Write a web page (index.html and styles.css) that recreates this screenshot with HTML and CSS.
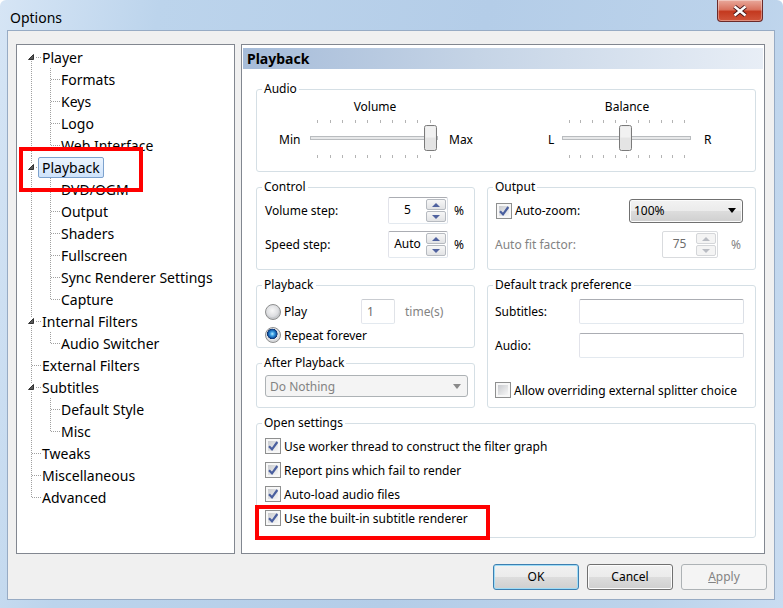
FILE: index.html
```html
<!DOCTYPE html>
<html lang="en">
<head>
<meta charset="UTF-8">
<title>Options</title>
<link rel="stylesheet" href="styles.css">
</head>
<body>
<div class="window">
    <div class="titlebar">
        <span class="title">Options</span>
        <div class="close-btn">
            <svg width="16" height="12" viewBox="0 0 16 12"><path d="M2.5 1.5 L13.5 10.5 M13.5 1.5 L2.5 10.5" stroke="#43161a" stroke-width="4.2"/><path d="M2.5 1.5 L13.5 10.5 M13.5 1.5 L2.5 10.5" stroke="#fff" stroke-width="2.4"/></svg>
        </div>
    </div>

    <div class="client">
        <div class="main">
            <!-- tree of pages -->
            <div class="tree-box">
                <ul class="tree">
                    <li>
                        <div class="node"><span class="twist"><svg width="8" height="8"><path d="M6.5 1.5 V6.5 H1.5 Z" fill="#595959" stroke="#333"/></svg></span><span class="label">Player</span></div>
                        <ul>
                            <li><div class="node"><span class="twist"></span><span class="label">Formats</span></div></li>
                            <li><div class="node"><span class="twist"></span><span class="label">Keys</span></div></li>
                            <li><div class="node"><span class="twist"></span><span class="label">Logo</span></div></li>
                            <li><div class="node"><span class="twist"></span><span class="label">Web Interface</span></div></li>
                        </ul>
                    </li>
                    <li>
                        <div class="node"><span class="twist"><svg width="8" height="8"><path d="M6.5 1.5 V6.5 H1.5 Z" fill="#595959" stroke="#333"/></svg></span><span class="label selected">Playback</span></div>
                        <ul>
                            <li><div class="node"><span class="twist"></span><span class="label">DVD/OGM</span></div></li>
                            <li><div class="node"><span class="twist"></span><span class="label">Output</span></div></li>
                            <li><div class="node"><span class="twist"></span><span class="label">Shaders</span></div></li>
                            <li><div class="node"><span class="twist"></span><span class="label">Fullscreen</span></div></li>
                            <li><div class="node"><span class="twist"></span><span class="label">Sync Renderer Settings</span></div></li>
                            <li><div class="node"><span class="twist"></span><span class="label">Capture</span></div></li>
                        </ul>
                    </li>
                    <li>
                        <div class="node"><span class="twist"><svg width="8" height="8"><path d="M6.5 1.5 V6.5 H1.5 Z" fill="#595959" stroke="#333"/></svg></span><span class="label">Internal Filters</span></div>
                        <ul>
                            <li><div class="node"><span class="twist"></span><span class="label">Audio Switcher</span></div></li>
                        </ul>
                    </li>
                    <li><div class="node"><span class="twist"></span><span class="label">External Filters</span></div></li>
                    <li>
                        <div class="node"><span class="twist"><svg width="8" height="8"><path d="M6.5 1.5 V6.5 H1.5 Z" fill="#595959" stroke="#333"/></svg></span><span class="label">Subtitles</span></div>
                        <ul>
                            <li><div class="node"><span class="twist"></span><span class="label">Default Style</span></div></li>
                            <li><div class="node"><span class="twist"></span><span class="label">Misc</span></div></li>
                        </ul>
                    </li>
                    <li><div class="node"><span class="twist"></span><span class="label">Tweaks</span></div></li>
                    <li><div class="node"><span class="twist"></span><span class="label">Miscellaneous</span></div></li>
                    <li><div class="node"><span class="twist"></span><span class="label">Advanced</span></div></li>
                </ul>
            </div>

            <!-- property page -->
            <div class="page">
                <div class="page-title">Playback</div>
                <div class="groups">
                    <fieldset class="group audio">
                        <legend>Audio</legend>
                        <div class="sliders">
                            <div class="slider vol">
                                <span class="slider-title">Volume</span>
                                <span class="end">Min</span>
                                <svg width="138" height="42">
                                    <path d="M11.5 2v3M24.5 2v3M36.5 2v3M49.5 2v3M61.5 2v3M74.5 2v3M86.5 2v3M99.5 2v3M111.5 2v3M124.5 2v3M11.5 37v3M24.5 37v3M36.5 37v3M49.5 37v3M61.5 37v3M74.5 37v3M86.5 37v3M99.5 37v3M111.5 37v3M124.5 37v3" stroke="#b4b4b4"/>
                                    <rect x="4.5" y="18.5" width="127" height="3" fill="#e7e8e9" stroke="#b9bcbf"/>
                                    <rect x="118.5" y="7.5" width="12" height="25" rx="2" fill="#e4e4e4" stroke="#7a7a7a"/>
                                    <rect x="119.5" y="8.5" width="10" height="11" fill="#f1f1f1"/>
                                </svg>
                                <span class="end far">Max</span>
                            </div>
                            <div class="slider bal">
                                <span class="slider-title">Balance</span>
                                <span class="end">L</span>
                                <svg width="138" height="42">
                                    <path d="M11.5 2v3M22.5 2v3M34.5 2v3M45.5 2v3M57.5 2v3M68.5 2v3M80.5 2v3M91.5 2v3M103.5 2v3M114.5 2v3M126.5 2v3M11.5 37v3M22.5 37v3M34.5 37v3M45.5 37v3M57.5 37v3M68.5 37v3M80.5 37v3M91.5 37v3M103.5 37v3M114.5 37v3M126.5 37v3" stroke="#b4b4b4"/>
                                    <rect x="4.5" y="18.5" width="128" height="3" fill="#e7e8e9" stroke="#b9bcbf"/>
                                    <rect x="61.5" y="7.5" width="12" height="25" rx="2" fill="#e4e4e4" stroke="#7a7a7a"/>
                                    <rect x="62.5" y="8.5" width="10" height="11" fill="#f1f1f1"/>
                                </svg>
                                <span class="end far">R</span>
                            </div>
                        </div>
                    </fieldset>

                    <fieldset class="group control">
                        <legend>Control</legend>
                        <div class="row">
                            <span class="field-label">Volume step:</span>
                            <span class="spin"><span class="spin-val">5</span><span class="spin-btns"><span class="up"></span><span class="down"></span></span></span>
                            <span class="unit">%</span>
                        </div>
                        <div class="row">
                            <span class="field-label">Speed step:</span>
                            <span class="spin"><span class="spin-val">Auto</span><span class="spin-btns"><span class="up"></span><span class="down"></span></span></span>
                            <span class="unit">%</span>
                        </div>
                    </fieldset>

                    <fieldset class="group output">
                        <legend>Output</legend>
                        <div class="row">
                            <span class="check-label zoom-label"><span class="check"><svg width="14" height="14"><path d="M3 7.2 L6 10.3 L11.3 3" fill="none" stroke="#4a5f9f" stroke-width="2.2"/></svg></span>Auto-zoom:</span>
                            <span class="combo">100%<span class="arrow"></span></span>
                        </div>
                        <div class="row">
                            <span class="field-label fit-label disabled">Auto fit factor:</span>
                            <span class="spin off"><span class="spin-val">75</span><span class="spin-btns"><span class="up"></span><span class="down"></span></span></span>
                            <span class="unit wide disabled">%</span>
                        </div>
                    </fieldset>

                    <fieldset class="group play">
                        <legend>Playback</legend>
                        <div class="row first">
                            <span class="check-label play-label"><span class="radio"></span>Play</span>
                            <span class="textbox times">1</span>
                            <span class="disabled times-label">time(s)</span>
                        </div>
                        <div class="row short">
                            <span class="check-label"><span class="radio on"></span>Repeat forever</span>
                        </div>
                    </fieldset>

                    <fieldset class="group deftrack">
                        <legend>Default track preference</legend>
                        <div class="row first">
                            <span class="field-label track-label">Subtitles:</span>
                            <span class="textbox track"></span>
                        </div>
                        <div class="row second">
                            <span class="field-label track-label">Audio:</span>
                            <span class="textbox track"></span>
                        </div>
                        <div class="row override">
                            <span class="check-label"><span class="check"></span>Allow overriding external splitter choice</span>
                        </div>
                    </fieldset>

                    <fieldset class="group after">
                        <legend>After Playback</legend>
                        <span class="combo off">Do Nothing<span class="arrow"></span></span>
                    </fieldset>

                    <fieldset class="group open">
                        <legend>Open settings</legend>
                        <div class="opt"><span class="check-label"><span class="check"><svg width="14" height="14"><path d="M3 7.2 L6 10.3 L11.3 3" fill="none" stroke="#4a5f9f" stroke-width="2.2"/></svg></span>Use worker thread to construct the filter graph</span></div>
                        <div class="opt"><span class="check-label"><span class="check"><svg width="14" height="14"><path d="M3 7.2 L6 10.3 L11.3 3" fill="none" stroke="#4a5f9f" stroke-width="2.2"/></svg></span>Report pins which fail to render</span></div>
                        <div class="opt"><span class="check-label"><span class="check"><svg width="14" height="14"><path d="M3 7.2 L6 10.3 L11.3 3" fill="none" stroke="#4a5f9f" stroke-width="2.2"/></svg></span>Auto-load audio files</span></div>
                        <div class="opt"><span class="check-label"><span class="check"><svg width="14" height="14"><path d="M3 7.2 L6 10.3 L11.3 3" fill="none" stroke="#4a5f9f" stroke-width="2.2"/></svg></span>Use the built-in subtitle renderer</span></div>
                    </fieldset>
                </div>
            </div>
        </div>

        <div class="buttons">
            <span class="btn default">OK</span>
            <span class="btn">Cancel</span>
            <span class="btn off"><u>A</u>pply</span>
        </div>
    </div>

    <!-- red annotation boxes -->
    <div class="mark mark-tree"></div>
    <div class="mark mark-check"></div>
</div>
</body>
</html>
```

FILE: styles.css
```css
body {
    margin: 0;
    font-family: "Noto Sans", "Open Sans", sans-serif;
    font-size: 12px;
    color: #000;
    background: #fff;
}

.window {
    position: relative;
    width: 783px;
    height: 608px;
    display: flex;
    flex-direction: column;
    box-sizing: border-box;
    background: linear-gradient(100deg, #d6e5f5 0, #bcd4ec 18%, #b4cde8 55%, #bcd3eb 85%, #c9dcf1 100%);
    border-radius: 6px 6px 0 0;
}

.titlebar {
    height: 30px;
    display: flex;
    align-items: flex-start;
    flex: none;
}

.title {
    font-size: 14px;
    line-height: 20px;
    padding: 8px 0 0 10px;
}

.close-btn {
    margin-left: auto;
    margin-right: 20px;
    width: 46px;
    height: 22px;
    box-sizing: border-box;
    border: 1px solid #6b2a2a;
    border-top: 0;
    border-radius: 0 0 4px 4px;
    background: linear-gradient(#e9a99c 0, #d9735f 45%, #c4391f 55%, #d0553b 100%);
    box-shadow: inset 0 0 0 1px rgba(255, 255, 255, 0.35);
    display: flex;
    align-items: center;
    justify-content: center;
}

.client {
    flex: 1;
    margin: 0 8px 8px 7px;
    border: 1px solid #97abc4;
    background: #f0f0f0;
    padding: 13px 7px 9px 8px;
    display: flex;
    flex-direction: column;
}

.main {
    display: flex;
    gap: 6px;
    height: 510px;
    margin-right: 2px;
}

/* tree */
.tree-box {
    width: 219px;
    box-sizing: border-box;
    border: 1px solid #828790;
    background: #fff;
    padding-top: 1px;
    font-size: 14px;
}

.tree, .tree ul {
    list-style: none;
    margin: 0;
    padding: 0;
}

.tree ul {
    padding-left: 19px;
}

.tree li {
    background: repeating-linear-gradient(to bottom, #a0a0a0 0 1px, transparent 1px 2px) 14px 0 / 1px 100% no-repeat;
}

.tree li:last-child {
    background-size: 1px 11px;
}

.tree > li:first-child {
    background-position: 14px 15px;
}

.node {
    display: flex;
    align-items: center;
    height: 22px;
}

.twist {
    flex: none;
    width: 25px;
    height: 22px;
    display: flex;
    align-items: center;
    background: repeating-linear-gradient(to right, #a0a0a0 0 1px, transparent 1px 2px) 15px 11px / 9px 1px no-repeat;
}

.twist svg {
    margin-left: 10px;
    background: #fff;
}

.label {
    white-space: nowrap;
    line-height: 19px;
}

.label.selected {
    margin-left: -4px;
    padding: 0 3px;
    border: 1px solid #7da2ce;
    border-radius: 2px;
    background: linear-gradient(#ebf4fe, #cfe3fb);
}

/* page */
.page {
    flex: 1;
    border: 1px solid #828790;
    background: #fff;
    padding: 3px 1px;
}

.page-title {
    height: 21px;
    line-height: 21px;
    padding-left: 4px;
    font-size: 14px;
    font-weight: bold;
    background: linear-gradient(to right, #a6bcd9, #c5d4e6 45%, #e8eef6);
}

.groups {
    display: grid;
    grid-template-columns: 219px 269px;
    grid-template-rows: 91px 91px 71px 53px 123px;
    gap: 7px 12px;
    margin: 12px 0 0 13px;
    grid-template-areas:
        "audio audio"
        "control output"
        "play deftrack"
        "after deftrack"
        "open open";
}

.group {
    margin: 0;
    padding: 0 8px;
    min-width: 0;
    border: 1px solid #d5dfe5;
    border-radius: 3px;
}

.group legend {
    padding: 0 2px;
    margin-left: -3px;
    line-height: 16px;
}

.audio { grid-area: audio; }
.control { grid-area: control; }
.output { grid-area: output; }
.play { grid-area: play; }
.deftrack { grid-area: deftrack; }
.after { grid-area: after; }
.open { grid-area: open; }

/* sliders */
.sliders {
    display: flex;
    padding: 2px 0 0 14px;
}

.slider {
    display: grid;
    grid-template-rows: 16px 42px;
    row-gap: 3px;
    align-items: center;
}

.slider.vol {
    width: 269px;
    grid-template-columns: 27px 138px 1fr;
}

.slider.bal {
    grid-template-columns: 10px 138px 1fr;
}

.slider-title {
    grid-row: 1;
    grid-column: 2;
    text-align: center;
    line-height: 16px;
}

.slider .end {
    grid-row: 2;
    grid-column: 1;
}

.slider svg {
    grid-row: 2;
    grid-column: 2;
    display: block;
}

.slider .end.far {
    grid-column: 3;
    padding-left: 5px;
}

.slider.bal .end.far {
    padding-left: 8px;
}

/* rows */
.row {
    display: flex;
    align-items: center;
    height: 27px;
}

.control .row:first-of-type,
.output .row:first-of-type {
    margin-top: 2px;
}

.control .row + .row,
.output .row + .row {
    margin-top: 7px;
}

.field-label {
    flex: none;
    width: 123px;
}

.unit {
    margin-left: 6px;
}

.unit.wide {
    margin-left: 13px;
}

.disabled {
    color: #838383;
}

.spin {
    display: flex;
    width: 60px;
    height: 27px;
    box-sizing: border-box;
    border: 1px solid;
    border-color: #abadb3 #dbdfe6 #e3e9ef #e2e3ea;
    border-radius: 2px;
    background: #fff;
}

.spin-val {
    flex: 1;
    text-align: center;
    line-height: 23px;
}

.spin-btns {
    display: flex;
    flex-direction: column;
    width: 20px;
    padding: 1px 1px 1px 0;
    gap: 1px;
}

.spin-btns span {
    flex: 1;
    display: flex;
    align-items: center;
    justify-content: center;
    border: 1px solid #b6bac0;
    border-radius: 2px;
    background: linear-gradient(#f7f7f7, #e2e3e5);
}

.spin-btns .up::after {
    content: "";
    border: 4px solid transparent;
    border-top: 0;
    border-bottom: 4px solid #50629f;
}

.spin-btns .down::after {
    content: "";
    border: 4px solid transparent;
    border-bottom: 0;
    border-top: 4px solid #50629f;
}

.spin.off {
    width: 56px;
    border-color: #d9dbde;
}

.spin.off .spin-val {
    color: #6d6d6d;
}

.spin.off .spin-btns span {
    border-color: #d4d6d9;
    background: #f4f4f4;
}

.spin.off .up::after {
    border-bottom-color: #b9bcc3;
}

.spin.off .down::after {
    border-top-color: #b9bcc3;
}

.fit-label {
    width: 167px;
    margin-left: -1px;
}

.check-label {
    display: flex;
    align-items: center;
    white-space: nowrap;
}

.zoom-label {
    flex: none;
    width: 133px;
}

.check {
    flex: none;
    width: 16px;
    height: 16px;
    margin-right: 3px;
    box-sizing: border-box;
    border: 1px solid #8e8f8f;
    background: linear-gradient(135deg, #c9cbcf, #f6f6f6) center / 10px 10px no-repeat, #f4f4f4;
    box-shadow: inset 0 0 0 2px #f7f7f7;
}

.check svg {
    display: block;
}

.radio {
    flex: none;
    width: 16px;
    height: 16px;
    margin-right: 3px;
    box-sizing: border-box;
    border: 1px solid #8e8f8f;
    border-radius: 50%;
    background: radial-gradient(circle at 45% 40%, #f8f8f8 0, #dcdde0 6px, #c8cacd 7px);
}

.radio.on {
    background: radial-gradient(circle at 45% 42%, #b9ecff 0, #3da1e6 2px, #135aa8 4px, #0c2f6c 5px, #e8e9eb 5.5px, #d6d8db 7px);
}

.combo {
    display: flex;
    align-items: center;
    justify-content: space-between;
    width: 114px;
    height: 24px;
    box-sizing: border-box;
    padding: 0 6px 0 4px;
    border: 1px solid #707070;
    border-radius: 3px;
    background: linear-gradient(#f2f2f2 0, #ebebeb 50%, #dddddd 50%, #cfcfcf 100%);
    box-shadow: inset 0 0 0 1px #fbfbfb;
}

.combo .arrow {
    border: 4px solid transparent;
    border-bottom: 0;
    border-top: 5px solid #000;
}

.combo.off {
    width: 203px;
    height: 22px;
    margin-top: 4px;
    border-color: #adb2b5;
    background: #f4f4f4;
    box-shadow: none;
    color: #838383;
}

.combo.off .arrow {
    border-top-color: #8a8a8a;
}

.textbox {
    box-sizing: border-box;
    height: 25px;
    border: 1px solid;
    border-color: #abadb3 #dbdfe6 #e3e9ef #e2e3ea;
    border-radius: 2px;
    background: #fff;
}

.play .row.first,
.deftrack .row.first {
    height: 25px;
    margin-top: 6px;
}

.play .row.short {
    height: 22px;
}

.play-label {
    flex: none;
    width: 96px;
}

.textbox.times {
    width: 34px;
    padding-left: 5px;
    line-height: 23px;
    color: #6d6d6d;
    border-color: #c9ccd1 #e0e3e8 #e3e9ef #e2e3ea;
}

.times-label {
    margin-left: 10px;
}

.track-label {
    width: 84px;
    margin-left: -1px;
}

.textbox.track {
    width: 165px;
}

.deftrack .row.second {
    height: 25px;
    margin-top: 9px;
}

.deftrack .row.override {
    height: 20px;
    margin-top: 22px;
    margin-left: -1px;
}

.open .opt {
    display: flex;
    align-items: center;
    height: 24px;
}

.open .opt:first-of-type {
    margin-top: 3px;
}

/* buttons */
.buttons {
    display: flex;
    justify-content: flex-end;
    gap: 8px;
    margin-top: 10px;
}

.btn {
    width: 86px;
    height: 26px;
    box-sizing: border-box;
    border: 1px solid #707070;
    border-radius: 3px;
    background: linear-gradient(#f2f2f2 0, #ebebeb 50%, #dddddd 50%, #cfcfcf 100%);
    box-shadow: inset 0 0 0 1px #fcfcfc;
    text-align: center;
    line-height: 24px;
}

.btn.default {
    border-color: #3c7fb1;
    box-shadow: inset 0 0 0 1px #9fdcf6;
}

.btn.off {
    border-color: #adb2b5;
    background: #f4f4f4;
    box-shadow: none;
    color: #838383;
}

/* annotation overlays */
.mark {
    position: absolute;
    box-sizing: border-box;
    border: 4px solid #ff0000;
}

.mark-tree {
    left: 19px;
    top: 147px;
    width: 124px;
    height: 45px;
}

.mark-check {
    left: 255px;
    top: 505px;
    width: 235px;
    height: 35px;
}
```
